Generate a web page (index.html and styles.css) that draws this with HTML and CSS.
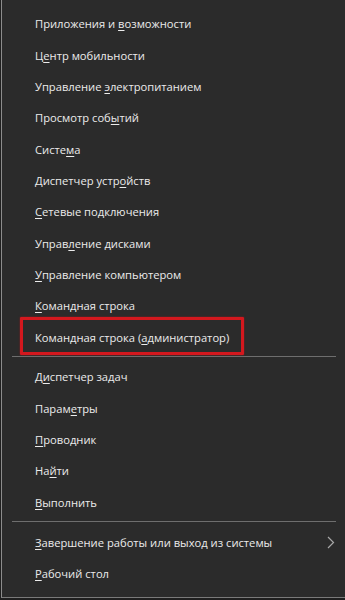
FILE: index.html
```html
<!DOCTYPE html>
<html lang="ru">
<head>
<meta charset="utf-8">
<title>Меню Win+X</title>
<link rel="stylesheet" href="styles.css">
</head>
<body>
<div class="frame">
  <nav class="menu">
    <div class="group">
      <div class="item"><span>Приложения и <u>в</u>озможности</span></div>
      <div class="item"><span>Ц<u>е</u>нтр мобильности</span></div>
      <div class="item"><span>Управление <u>э</u>лектропитанием</span></div>
      <div class="item"><span>Просмотр соб<u>ы</u>тий</span></div>
      <div class="item"><span>Систе<u>м</u>а</span></div>
      <div class="item"><span>Диспетчер устр<u>о</u>йств</span></div>
      <div class="item"><span><u>С</u>етевые подключения</span></div>
      <div class="item"><span>Управ<u>л</u>ение дисками</span></div>
      <div class="item"><span><u>У</u>правление компьютером</span></div>
      <div class="item"><span><u>К</u>омандная строка</span></div>
      <div class="item item-marked"><span>Командная строка (<u>а</u>дминистратор)</span></div>
    </div>
    <div class="sep"></div>
    <div class="group">
      <div class="item"><span>Д<u>и</u>спетчер задач</span></div>
      <div class="item"><span>Парам<u>е</u>тры</span></div>
      <div class="item"><span><u>П</u>роводник</span></div>
      <div class="item"><span>На<u>й</u>ти</span></div>
      <div class="item"><span><u>В</u>ыполнить</span></div>
    </div>
    <div class="sep"></div>
    <div class="group">
      <div class="item item-sub"><span><u>З</u>авершение работы или выход из системы</span>
        <svg class="chev" width="8" height="13" viewBox="0 0 8 13"><polyline points="1,1 6.5,6.5 1,12" fill="none" stroke="#a8a8a8" stroke-width="1.2"/></svg>
      </div>
      <div class="item"><span><u>Р</u>абочий стол</span></div>
    </div>
  </nav>
</div>
</body>
</html>
```
FILE: styles.css
```css
html, body {
  margin: 0;
  padding: 0;
  background: #1f1f1f;
}
.frame {
  width: 345px;
  height: 600px;
  padding-left: 1px;
  box-sizing: border-box;
  overflow: hidden;
}
.menu {
  height: 598px;
  box-sizing: border-box;
  background: #2b2b2b;
  border-left: 1px solid #8c8c8c;
  border-bottom: 1px solid #7a7a7a;
  padding-top: 8px;
  font-family: "Open Sans", "Noto Sans", sans-serif;
  font-size: 11.2px;
  color: #ececec;
}
.item {
  position: relative;
  height: 31.35px;
  display: flex;
  align-items: center;
  padding-left: 33px;
  padding-right: 10px;
  white-space: nowrap;
}
.item u {
  text-decoration: underline;
  text-underline-offset: 2px;
  text-decoration-thickness: 1px;
}
.item-sub {
  justify-content: space-between;
}
.chev {
  display: block;
}
.item-marked::after {
  content: "";
  position: absolute;
  left: 18px;
  top: -4px;
  width: 218px;
  height: 32px;
  border: 3px solid #d3181e;
  border-radius: 1px;
  box-shadow: 0 0 2px rgba(211, 24, 30, 0.6);
}
.sep {
  height: 1px;
  background: #6e6e6e;
  margin: 3px 9px 4.5px 10px;
}
```
